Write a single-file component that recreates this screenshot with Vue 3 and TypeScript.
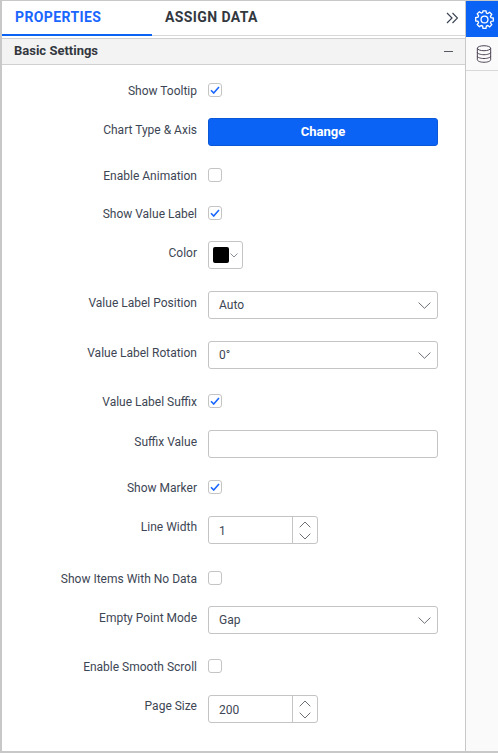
<script setup lang="ts">
type Kind = 'check' | 'button' | 'color' | 'select' | 'text' | 'spin'

interface Row {
    label: string
    kind: Kind
    value?: string
    checked?: boolean
    // extra space above the row, on top of the common gap
    extra?: number
}

const rows: Row[] = [
    { label: 'Show Tooltip', kind: 'check', checked: true },
    { label: 'Chart Type & Axis', kind: 'button', value: 'Change', extra: -1 },
    { label: 'Enable Animation', kind: 'check' },
    { label: 'Show Value Label', kind: 'check', checked: true, extra: 2 },
    { label: 'Color', kind: 'color', extra: -1 },
    { label: 'Value Label Position', kind: 'select', value: 'Auto' },
    { label: 'Value Label Rotation', kind: 'select', value: '0°' },
    { label: 'Value Label Suffix', kind: 'check', checked: true, extra: 3 },
    { label: 'Suffix Value', kind: 'text' },
    { label: 'Show Marker', kind: 'check', checked: true },
    { label: 'Line Width', kind: 'spin', value: '1' },
    { label: 'Show Items With No Data', kind: 'check', extra: 5 },
    { label: 'Empty Point Mode', kind: 'select', value: 'Gap', extra: -1 },
    { label: 'Enable Smooth Scroll', kind: 'check', extra: 3 },
    { label: 'Page Size', kind: 'spin', value: '200' }
]
</script>

<template>
    <div class="panel">
        <div class="main">
            <div class="tabs">
                <div class="tab active">PROPERTIES</div>
                <div class="tab">ASSIGN DATA</div>
                <svg class="collapse" width="12" height="12" viewBox="0 0 12 12" fill="none">
                    <path d="M1 1 6 6l-5 5M6.500 1l5 5-5 5" stroke="#3d4654" stroke-width="1.200" />
                </svg>
            </div>

            <div class="section-head">
                <span class="section-title">Basic Settings</span>
                <i class="minus"></i>
            </div>

            <div class="form">
                <div
                    v-for="row in rows"
                    :key="row.label"
                    :class="['row', `row-${row.kind}`]"
                    :style="row.extra ? { marginTop: `${row.extra}px` } : undefined"
                >
                    <label class="label">{{ row.label }}</label>

                    <span v-if="row.kind === 'check'" class="check">
                        <svg v-if="row.checked" width="10" height="8" viewBox="0 0 10 8" fill="none">
                            <path d="M1 4.200 3.700 7 9 1" stroke="#1a66ff" stroke-width="1.600" />
                        </svg>
                    </span>

                    <button v-else-if="row.kind === 'button'" class="change">{{ row.value }}</button>

                    <div v-else-if="row.kind === 'color'" class="color">
                        <span class="swatch"></span>
                        <svg width="8" height="5" viewBox="0 0 8 5" fill="none">
                            <path d="M.5.500 4 4 7.500.500" stroke="#6b7280" stroke-width=".8" />
                        </svg>
                    </div>

                    <div v-else-if="row.kind === 'select'" class="field select">
                        <span>{{ row.value }}</span>
                        <svg width="13" height="7" viewBox="0 0 13 7" fill="none">
                            <path d="M.6.600 6.500 6.300 12.400.600" stroke="#5a6068" stroke-width=".9" />
                        </svg>
                    </div>

                    <div v-else-if="row.kind === 'text'" class="field"></div>

                    <div v-else class="field spin">
                        <span class="spin-value">{{ row.value }}</span>
                        <div class="spin-btns">
                            <svg width="12" height="7" viewBox="0 0 12 7" fill="none">
                                <path d="M.7 6.300 6 1l5.300 5.300" stroke="#5a6068" stroke-width=".9" />
                            </svg>
                            <svg width="12" height="7" viewBox="0 0 12 7" fill="none">
                                <path d="M.7.700 6 6 11.300.700" stroke="#5a6068" stroke-width=".9" />
                            </svg>
                        </div>
                    </div>
                </div>
            </div>
        </div>

        <div class="side">
            <div class="side-btn current">
                <svg width="19" height="19" viewBox="0 0 22 22" fill="none" stroke="#fff" stroke-width="1.500">
                    <path d="M9.300 1.500h3.400l.5 2.700 1.500.6 2.300-1.500 2.400 2.400-1.500 2.300.6 1.500 2.700.5v3.400l-2.700.5-.6 1.500 1.500 2.300-2.400 2.400-2.300-1.500-1.500.6-.5 2.700H9.300l-.5-2.700-1.500-.6L5 19.900l-2.400-2.400 1.500-2.300-.6-1.500-2.700-.5V9.300l2.700-.5.600-1.500L2.600 5 5 2.600l2.300 1.500 1.500-.6z" transform="translate(0 -.6)" />
                    <circle cx="11" cy="11" r="4" />
                </svg>
            </div>
            <div class="side-btn">
                <svg width="16" height="18" viewBox="0 0 18 20" fill="none" stroke="#4a4150" stroke-width="1.100">
                    <ellipse cx="9" cy="3.500" rx="7.500" ry="2.800" />
                    <path d="M1.500 3.500v13c0 1.500 3.400 2.800 7.500 2.800s7.500-1.300 7.500-2.800v-13" />
                    <path d="M1.500 8c0 1.500 3.400 2.800 7.500 2.800s7.500-1.300 7.500-2.800M1.500 12.300c0 1.500 3.400 2.800 7.500 2.800s7.500-1.300 7.500-2.800" />
                </svg>
            </div>
        </div>
    </div>
</template>

<style>
html,
body {
    margin: 0;
    background: #fff;
}
</style>

<style scoped>
.panel {
    width: 498px;
    height: 753px;
    box-sizing: border-box;
    display: flex;
    border-top: 1px solid #c8c8c8;
    border-left: 2px solid #c8c8c8;
    border-bottom: 2px solid #c8c8c8;
    background: #fff;
    font-family: Roboto, "Liberation Sans", sans-serif;
    font-size: 12px;
    color: #3d4654;
    overflow: hidden;
}

.main {
    width: 463px;
    flex: none;
    display: flex;
    flex-direction: column;
    border-right: 1px solid #c8c8c8;
}

.tabs {
    height: 35px;
    flex: none;
    box-sizing: border-box;
    display: flex;
    align-items: stretch;
    border-bottom: 1px solid #d8d8d8;
    position: relative;
}

.tab {
    width: 150px;
    box-sizing: border-box;
    padding: 8px 0 0 13px;
    font-size: 14px;
    font-weight: 700;
    letter-spacing: 0.4px;
    color: #33383f;
}

.tab.active {
    color: #1a66ff;
    height: 35px;
    border-bottom: 2px solid #0b63f6;
}

.collapse {
    position: absolute;
    right: 7px;
    top: 11px;
}

.section-head {
    margin-top: 2px;
    height: 27px;
    flex: none;
    box-sizing: border-box;
    display: flex;
    align-items: center;
    justify-content: space-between;
    padding: 0 12px;
    background: #f3f3f3;
    border-top: 1px solid #d0d0d0;
    border-bottom: 1px solid #d0d0d0;
    font-size: 13px;
    font-weight: 700;
    color: #33383f;
}

.section-title {
    margin-top: -2px;
}

.minus {
    width: 9px;
    height: 1px;
    background: #55595f;
}

.form {
    display: flex;
    flex-direction: column;
    gap: 22px;
    padding-top: 18px;
}

.row {
    display: flex;
    align-items: flex-start;
    gap: 11px;
}

.row-check {
    height: 14px;
}

.label {
    width: 195px;
    flex: none;
    text-align: right;
    line-height: 14px;
    white-space: nowrap;
}

.row-check .label {
    margin-top: 1px;
}

.row-button .label,
.row-color .label,
.row-select .label,
.row-text .label {
    margin-top: 5px;
}

.row-spin .label {
    margin-top: 4px;
}

.check {
    width: 14px;
    height: 14px;
    box-sizing: border-box;
    border: 1px solid #c4c4c4;
    border-radius: 3px;
    display: flex;
    align-items: center;
    justify-content: center;
}

.change {
    width: 230px;
    height: 28px;
    padding: 0 0 2px;
    border: 1px solid #0a58d6;
    border-radius: 3px;
    background: #0b63f6;
    color: #fff;
    font: 700 13px Roboto, "Liberation Sans", sans-serif;
}

.color {
    width: 35px;
    height: 28px;
    box-sizing: border-box;
    border: 1px solid #c4c4c4;
    border-radius: 3px;
    display: flex;
    align-items: center;
    padding-left: 4px;
    gap: 1px;
}

.swatch {
    width: 16px;
    height: 16px;
    background: #000;
    border-radius: 2px;
}

.field {
    width: 230px;
    height: 28px;
    box-sizing: border-box;
    border: 1px solid #c4c4c4;
    border-radius: 3px;
    display: flex;
    align-items: center;
}

.select {
    justify-content: space-between;
    padding: 0 6px 0 10px;
}

.spin {
    width: 110px;
}

.spin-value {
    flex: 1;
    padding: 2px 0 0 10px;
}

.spin-btns {
    width: 25px;
    height: 100%;
    box-sizing: border-box;
    border-left: 1px solid #c4c4c4;
    display: flex;
    flex-direction: column;
    align-items: center;
    justify-content: center;
    gap: 5px;
}

.side {
    flex: 1;
    background: #fafafa;
}

.side-btn {
    height: 33px;
    padding-left: 4px;
    display: flex;
    align-items: center;
    justify-content: center;
    border-bottom: 1px solid #d8d8d8;
}

.side-btn.current {
    height: 36px;
    background: #0b63f6;
    border-bottom: 0;
}
</style>
